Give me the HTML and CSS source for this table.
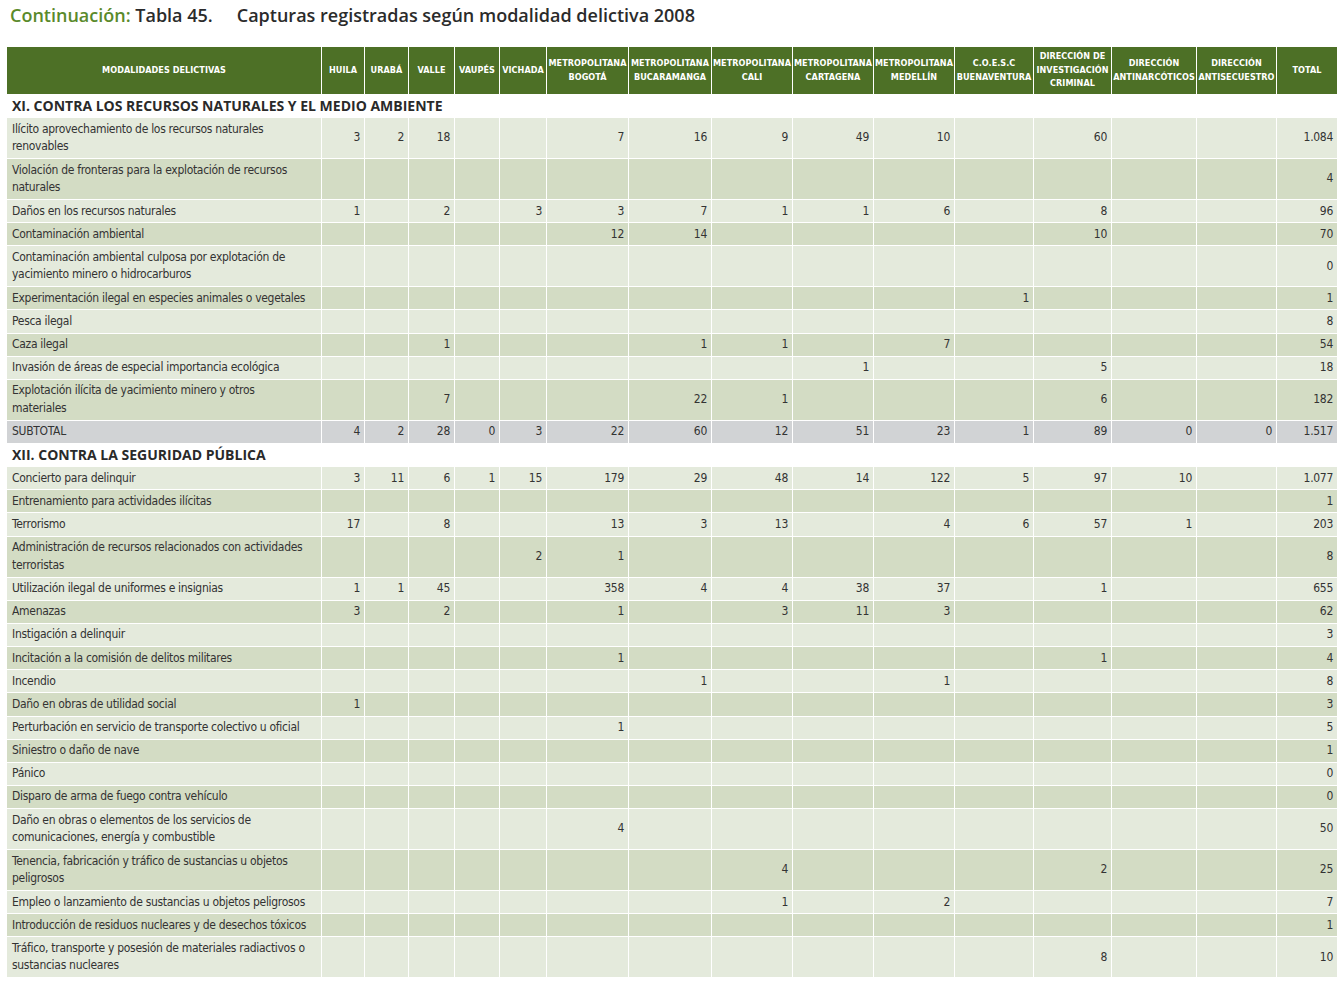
FILE: index.html
```html
<!DOCTYPE html>
<html lang="es">
<head>
<meta charset="utf-8">
<title>Tabla 45</title>
<link rel="stylesheet" href="styles.css">
</head>
<body>
<h1 class="title"><span class="cont">Continuación:</span> <span class="tab">Tabla 45.</span><span class="cap">Capturas registradas según modalidad delictiva 2008</span></h1>
<table class="data">
<colgroup>
<col class="c-mod"><col class="c-hui"><col class="c-ura"><col class="c-val"><col class="c-vau"><col class="c-vic"><col class="c-bog"><col class="c-buc"><col class="c-cal"><col class="c-car"><col class="c-med"><col class="c-coe"><col class="c-dij"><col class="c-ant"><col class="c-sec"><col class="c-tot">
</colgroup>
<thead>
<tr>
<th>MODALIDADES DELICTIVAS</th><th>HUILA</th><th>URABÁ</th><th>VALLE</th><th>VAUPÉS</th><th>VICHADA</th><th>METROPOLITANA<br>BOGOTÁ</th><th>METROPOLITANA<br>BUCARAMANGA</th><th>METROPOLITANA<br>CALI</th><th>METROPOLITANA<br>CARTAGENA</th><th>METROPOLITANA<br>MEDELLÍN</th><th>C.O.E.S.C<br>BUENAVENTURA</th><th>DIRECCIÓN DE<br>INVESTIGACIÓN<br>CRIMINAL</th><th>DIRECCIÓN<br>ANTINARCÓTICOS</th><th>DIRECCIÓN<br>ANTISECUESTRO</th><th>TOTAL</th>
</tr>
</thead>
<tbody>
<tr class="sec"><td colspan="16">XI. CONTRA LOS RECURSOS NATURALES Y EL MEDIO AMBIENTE</td></tr>
<tr class="l two"><td>Ilícito aprovechamiento de los recursos naturales<br>renovables</td><td>3</td><td>2</td><td>18</td><td></td><td></td><td>7</td><td>16</td><td>9</td><td>49</td><td>10</td><td></td><td>60</td><td></td><td></td><td>1.084</td></tr>
<tr class="d two"><td>Violación de fronteras para la explotación de recursos<br>naturales</td><td></td><td></td><td></td><td></td><td></td><td></td><td></td><td></td><td></td><td></td><td></td><td></td><td></td><td></td><td>4</td></tr>
<tr class="l"><td>Daños en los recursos naturales</td><td>1</td><td></td><td>2</td><td></td><td>3</td><td>3</td><td>7</td><td>1</td><td>1</td><td>6</td><td></td><td>8</td><td></td><td></td><td>96</td></tr>
<tr class="d"><td>Contaminación ambiental</td><td></td><td></td><td></td><td></td><td></td><td>12</td><td>14</td><td></td><td></td><td></td><td></td><td>10</td><td></td><td></td><td>70</td></tr>
<tr class="l two"><td>Contaminación ambiental culposa por explotación de<br>yacimiento minero o hidrocarburos</td><td></td><td></td><td></td><td></td><td></td><td></td><td></td><td></td><td></td><td></td><td></td><td></td><td></td><td></td><td>0</td></tr>
<tr class="d"><td>Experimentación ilegal en especies animales o vegetales</td><td></td><td></td><td></td><td></td><td></td><td></td><td></td><td></td><td></td><td></td><td>1</td><td></td><td></td><td></td><td>1</td></tr>
<tr class="l"><td>Pesca ilegal</td><td></td><td></td><td></td><td></td><td></td><td></td><td></td><td></td><td></td><td></td><td></td><td></td><td></td><td></td><td>8</td></tr>
<tr class="d"><td>Caza ilegal</td><td></td><td></td><td>1</td><td></td><td></td><td></td><td>1</td><td>1</td><td></td><td>7</td><td></td><td></td><td></td><td></td><td>54</td></tr>
<tr class="l"><td>Invasión de áreas de especial importancia ecológica</td><td></td><td></td><td></td><td></td><td></td><td></td><td></td><td></td><td>1</td><td></td><td></td><td>5</td><td></td><td></td><td>18</td></tr>
<tr class="d two"><td>Explotación ilícita de yacimiento minero y otros<br>materiales</td><td></td><td></td><td>7</td><td></td><td></td><td></td><td>22</td><td>1</td><td></td><td></td><td></td><td>6</td><td></td><td></td><td>182</td></tr>
<tr class="sub"><td>SUBTOTAL</td><td>4</td><td>2</td><td>28</td><td>0</td><td>3</td><td>22</td><td>60</td><td>12</td><td>51</td><td>23</td><td>1</td><td>89</td><td>0</td><td>0</td><td>1.517</td></tr>
<tr class="sec"><td colspan="16">XII. CONTRA LA SEGURIDAD PÚBLICA</td></tr>
<tr class="l"><td>Concierto para delinquir</td><td>3</td><td>11</td><td>6</td><td>1</td><td>15</td><td>179</td><td>29</td><td>48</td><td>14</td><td>122</td><td>5</td><td>97</td><td>10</td><td></td><td>1.077</td></tr>
<tr class="d"><td>Entrenamiento para actividades ilícitas</td><td></td><td></td><td></td><td></td><td></td><td></td><td></td><td></td><td></td><td></td><td></td><td></td><td></td><td></td><td>1</td></tr>
<tr class="l"><td>Terrorismo</td><td>17</td><td></td><td>8</td><td></td><td></td><td>13</td><td>3</td><td>13</td><td></td><td>4</td><td>6</td><td>57</td><td>1</td><td></td><td>203</td></tr>
<tr class="d two"><td>Administración de recursos relacionados con actividades<br>terroristas</td><td></td><td></td><td></td><td></td><td>2</td><td>1</td><td></td><td></td><td></td><td></td><td></td><td></td><td></td><td></td><td>8</td></tr>
<tr class="l"><td>Utilización ilegal de uniformes e insignias</td><td>1</td><td>1</td><td>45</td><td></td><td></td><td>358</td><td>4</td><td>4</td><td>38</td><td>37</td><td></td><td>1</td><td></td><td></td><td>655</td></tr>
<tr class="d"><td>Amenazas</td><td>3</td><td></td><td>2</td><td></td><td></td><td>1</td><td></td><td>3</td><td>11</td><td>3</td><td></td><td></td><td></td><td></td><td>62</td></tr>
<tr class="l"><td>Instigación a delinquir</td><td></td><td></td><td></td><td></td><td></td><td></td><td></td><td></td><td></td><td></td><td></td><td></td><td></td><td></td><td>3</td></tr>
<tr class="d"><td>Incitación a la comisión de delitos militares</td><td></td><td></td><td></td><td></td><td></td><td>1</td><td></td><td></td><td></td><td></td><td></td><td>1</td><td></td><td></td><td>4</td></tr>
<tr class="l"><td>Incendio</td><td></td><td></td><td></td><td></td><td></td><td></td><td>1</td><td></td><td></td><td>1</td><td></td><td></td><td></td><td></td><td>8</td></tr>
<tr class="d"><td>Daño en obras de utilidad social</td><td>1</td><td></td><td></td><td></td><td></td><td></td><td></td><td></td><td></td><td></td><td></td><td></td><td></td><td></td><td>3</td></tr>
<tr class="l"><td>Perturbación en servicio de transporte colectivo u oficial</td><td></td><td></td><td></td><td></td><td></td><td>1</td><td></td><td></td><td></td><td></td><td></td><td></td><td></td><td></td><td>5</td></tr>
<tr class="d"><td>Siniestro o daño de nave</td><td></td><td></td><td></td><td></td><td></td><td></td><td></td><td></td><td></td><td></td><td></td><td></td><td></td><td></td><td>1</td></tr>
<tr class="l"><td>Pánico</td><td></td><td></td><td></td><td></td><td></td><td></td><td></td><td></td><td></td><td></td><td></td><td></td><td></td><td></td><td>0</td></tr>
<tr class="d"><td>Disparo de arma de fuego contra vehículo</td><td></td><td></td><td></td><td></td><td></td><td></td><td></td><td></td><td></td><td></td><td></td><td></td><td></td><td></td><td>0</td></tr>
<tr class="l two"><td>Daño en obras o elementos de los servicios de<br>comunicaciones, energía y combustible</td><td></td><td></td><td></td><td></td><td></td><td>4</td><td></td><td></td><td></td><td></td><td></td><td></td><td></td><td></td><td>50</td></tr>
<tr class="d two"><td>Tenencia, fabricación y tráfico de sustancias u objetos<br>peligrosos</td><td></td><td></td><td></td><td></td><td></td><td></td><td></td><td>4</td><td></td><td></td><td></td><td>2</td><td></td><td></td><td>25</td></tr>
<tr class="l"><td>Empleo o lanzamiento de sustancias u objetos peligrosos</td><td></td><td></td><td></td><td></td><td></td><td></td><td></td><td>1</td><td></td><td>2</td><td></td><td></td><td></td><td></td><td>7</td></tr>
<tr class="d"><td>Introducción de residuos nucleares y de desechos tóxicos</td><td></td><td></td><td></td><td></td><td></td><td></td><td></td><td></td><td></td><td></td><td></td><td></td><td></td><td></td><td>1</td></tr>
<tr class="l two"><td>Tráfico, transporte y posesión de materiales radiactivos o<br>sustancias nucleares</td><td></td><td></td><td></td><td></td><td></td><td></td><td></td><td></td><td></td><td></td><td></td><td>8</td><td></td><td></td><td>10</td></tr>
</tbody>
</table>
</body>
</html>
```
FILE: styles.css
```css
html, body {
  margin: 0;
  padding: 0;
  background: #ffffff;
}
body {
  padding: 4px 0 0 6px;
  font-family: "DejaVu Sans Condensed", "Liberation Sans", sans-serif;
  color: #333333;
}
.title {
  margin: 0 0 0 4px;
  height: 42px;
  font-family: "Open Sans", "Liberation Sans", sans-serif;
  font-size: 18px;
  font-weight: 600;
  line-height: 22px;
  color: #2b2b2b;
}
.title .cont {
  color: #5a8a2b;
}
.title .cap {
  margin-left: 24px;
}
.data {
  table-layout: fixed;
  border-collapse: collapse;
  width: 1331px;
}
.c-mod { width: 315px; }
.c-hui { width: 43px; }
.c-ura { width: 44px; }
.c-val { width: 46px; }
.c-vau { width: 45px; }
.c-vic { width: 47px; }
.c-bog { width: 82px; }
.c-buc { width: 83px; }
.c-cal { width: 81px; }
.c-car { width: 81px; }
.c-med { width: 81px; }
.c-coe { width: 79px; }
.c-dij { width: 78px; }
.c-ant { width: 85px; }
.c-sec { width: 80px; }
.c-tot { width: 61px; }
.data th {
  background: #4d7026;
  color: #ffffff;
  font-family: "DejaVu Sans Condensed", "Liberation Sans", sans-serif;
  font-size: 9px;
  font-weight: bold;
  line-height: 13.5px;
  letter-spacing: 0.05px;
  height: 47px;
  padding: 0;
  border: 1px solid #ffffff;
  text-align: center;
  vertical-align: middle;
  white-space: nowrap;
  overflow: hidden;
}
.data td {
  border: 1px solid #ffffff;
  padding: 2.5px 4px 2.25px 4px;
  font-size: 12px;
  letter-spacing: -0.3px;
  line-height: 17.4px;
  text-align: right;
  vertical-align: middle;
  white-space: nowrap;
  overflow: hidden;
  color: #333333;
}
.data tr.two td {
  line-height: 17.6px;
}
.data td:first-child {
  text-align: left;
  padding-left: 5px;
}
.data tr.l td { background: #e4eadc; }
.data tr.d td { background: #d3dcc4; }
.data tr.sub td { background: #d1d3d5; }
.data tr.sec td {
  background: #ffffff;
  font-family: "Open Sans", "Liberation Sans", sans-serif;
  font-weight: bold;
  font-size: 14px;
  letter-spacing: 0;
  color: #2a2a2a;
  padding: 1.5px 4px 3.25px 5px;
}
```
